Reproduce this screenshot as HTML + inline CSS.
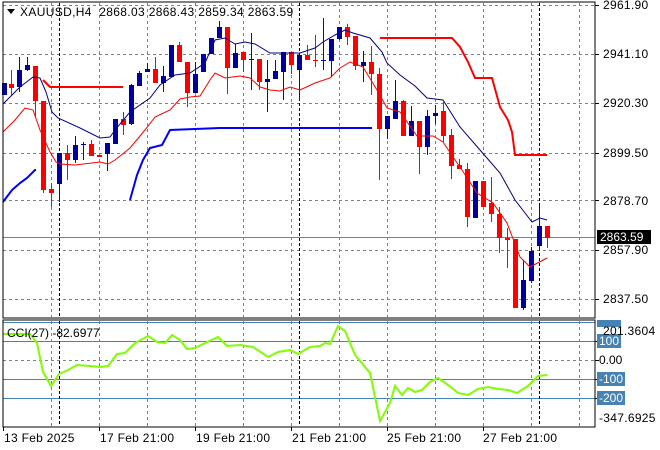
<!DOCTYPE html>
<html><head><meta charset="utf-8"><style>
html,body{margin:0;padding:0;background:#fff;width:660px;height:450px;overflow:hidden}
svg{display:block;font-family:"Liberation Sans",sans-serif}
</style></head><body>
<svg id="s" width="660" height="450" xmlns="http://www.w3.org/2000/svg">
<rect width="660" height="450" fill="#fff"/>
<g id="grid" stroke="#78818c" stroke-dasharray="3,3" stroke-width="1"></g>
<line x1="3" y1="237.5" x2="595" y2="237.5" stroke="#78818c"/>
<g id="lev" stroke="#4682b4" stroke-width="1">
<line x1="3" y1="322.5" x2="595" y2="322.5"/>
<line x1="3" y1="341.5" x2="595" y2="341.5"/>
<line x1="3" y1="379.5" x2="595" y2="379.5"/>
<line x1="3" y1="398.5" x2="595" y2="398.5"/>
</g>
<g id="dots" stroke="#000" stroke-dasharray="3,2"></g>
<g id="c"></g>
<polyline fill="none" stroke="#00008b" stroke-width="1" points="3,104 20,87 33,77 40,78 46,92 52,112 58,118 80,128 100,138 110,137 115,130 130,112 150,98 160,85 175,75 190,73 205,63 215,40 225,38 235,44 245,42 255,44 270,53 285,53 300,53 315,48 323,42 335,35 345,30 353,33 370,38 382,52 387,63 400,75 415,86 427,98 443,100 460,127 480,150 500,173 515,200 532,222 540,218 547,220"/>
<polyline fill="none" stroke="#ff0000" stroke-width="1" points="3,132 15,120 25,108 33,110 40,130 50,152 56,162 60,164 75,165 100,162 108,164 115,160 130,148 145,130 155,117 170,110 180,99 190,97 200,96 210,80 215,73 225,78 240,76 250,78 260,87 270,90 280,91 290,87 300,90 315,83 330,78 340,68 350,62 363,67 377,90 387,108 400,112 417,136 433,136 443,142 453,157 460,167 477,193 493,203 507,223 520,257 530,267 547,258"/>
<polyline fill="none" stroke="#0000ff" stroke-width="2" points="3,202 12,190 20,183 27,178 35,170 36,170"/>
<polyline fill="none" stroke="#0000ff" stroke-width="2" points="130,200 137,175 143,160 150,148 162,145 170,130 220,128 372,128"/>
<polyline fill="none" stroke="#ff0000" stroke-width="2" points="43,80 50,87 123,87"/>
<polyline fill="none" stroke="#ff0000" stroke-width="2" points="380,38 452,38 460,47 468,62 475,78 492,78 500,107 508,120 512,132 515,155 547,155"/>
<polyline fill="none" stroke="#7fff00" stroke-width="2" points="3,334 30,334 37,343 43,372 51,386 59,374 68,370 77,365 90,366 100,367 108,366 117,354 125,353 135,343 148,336 157,342 165,343 172,335 180,340 187,349 195,348 205,343 218,337 227,346 240,345 253,347 268,357 278,352 290,350 298,354 310,347 320,346 325,343 330,344 338,326 345,331 355,355 370,373 380,421 390,403 395,386 402,395 408,388 415,392 422,390 430,382 438,378 448,385 458,393 468,395 478,389 488,387 498,389 508,390 517,393 528,386 538,376 547,375"/>
<rect x="3" y="2" width="592" height="316" fill="none" stroke="#000"/>
<rect x="3" y="320" width="592" height="107" fill="none" stroke="#000"/>
<g id="ticks" stroke="#000"></g>
<polygon points="7,9 15,9 11,14" fill="#000"/>
<text x="20" y="16" font-size="12" letter-spacing="0.35" fill="#000" xml:space="preserve">XAUUSD,H4  2868.03 2868.43 2859.34 2863.59</text>
<text x="7" y="337" font-size="12" fill="#000">CCI(27) -82.6977</text>
<g font-size="12" fill="#000" id="ax" letter-spacing="0.3">
<text x="603" y="9">2961.90</text>
<text x="603" y="58">2941.10</text>
<text x="603" y="107">2920.30</text>
<text x="603" y="157">2899.50</text>
<text x="603" y="205">2878.70</text>
<text x="603" y="254">2857.90</text>
<text x="603" y="303">2837.50</text>
</g>
<rect x="597" y="230" width="54" height="14" fill="#000"/>
<text x="600" y="241" font-size="12" fill="#fff">2863.59</text>
<rect x="597" y="320" width="24" height="7" fill="#4682b4"/>
<rect x="597" y="334" width="24" height="14" fill="#4682b4"/>
<text x="599" y="345" font-size="12" fill="#fff">100</text>
<text x="603" y="335" font-size="12" fill="#000" letter-spacing="0.3">201.3604</text>
<text x="599" y="364" font-size="12" fill="#000">0.00</text>
<rect x="597" y="372" width="28" height="14" fill="#4682b4"/>
<text x="599" y="383" font-size="12" fill="#fff">-100</text>
<rect x="597" y="391" width="28" height="14" fill="#4682b4"/>
<text x="599" y="402" font-size="12" fill="#fff">-200</text>
<text x="599" y="422" font-size="12" fill="#000" letter-spacing="0.3">-347.6925</text>
<g font-size="12" fill="#000" letter-spacing="0.3">
<text x="4" y="442">13 Feb 2025</text>
<text x="100" y="442">17 Feb 21:00</text>
<text x="196" y="442">19 Feb 21:00</text>
<text x="292" y="442">21 Feb 21:00</text>
<text x="387" y="442">25 Feb 21:00</text>
<text x="483" y="442">27 Feb 21:00</text>
</g>
</svg>
<script>
var NS="http://www.w3.org/2000/svg";
function el(p,t,a){var e=document.createElementNS(NS,t);for(var k in a)e.setAttribute(k,a[k]);p.appendChild(e);return e;}
var g=document.getElementById('grid');
[5,54,103,153,200,250,299].forEach(function(y){el(g,'line',{x1:3,x2:595,y1:y+.5,y2:y+.5});});
el(g,'line',{x1:3,x2:595,y1:360.5,y2:360.5});
[51,99,147,195,243,291,339,387,435,483,531,579].forEach(function(x){el(g,'line',{x1:x+.5,x2:x+.5,y1:3,y2:317});el(g,'line',{x1:x+.5,x2:x+.5,y1:321,y2:426});});
var d=document.getElementById('dots');
[59,299,539].forEach(function(x){el(d,'line',{x1:x+.5,x2:x+.5,y1:3,y2:317});el(d,'line',{x1:x+.5,x2:x+.5,y1:321,y2:426});});
var t=document.getElementById('ticks');
[5,54,103,153,200,250,299,341,360,379,398].forEach(function(y){el(t,'line',{x1:595,x2:599,y1:y+.5,y2:y+.5});});
[3,99,195,291,387,483].forEach(function(x){el(t,'line',{x1:x+.5,x2:x+.5,y1:427,y2:431});});
var C=[
[4,83,95,83,95,'b'],[11,84,88,70,95,'r'],[19,70,87,57,92,'b'],[27,65,70,57,71,'b'],[35,66,101,66,117,'r'],[43,101,190,101,193,'r'],[51,189,193,183,207,'r'],[59,153,184,153,202,'b'],[67,153,160,145,180,'r'],[75,145,160,136,163,'b'],[83,144,145,142,160,'b'],[91,144,156,140,156,'r'],[99,155,157,155,157,'r'],[107,143,154,143,171,'b'],[115,119,144,119,144,'b'],[123,119,125,112,135,'r'],[131,85,124,84,125,'b'],[139,73,86,71,86,'b'],[147,69,72,63,72,'b'],[155,69,83,57,83,'r'],[163,76,83,66,92,'b'],[171,45,77,45,77,'b'],[179,45,62,42,62,'r'],[187,62,93,62,107,'r'],[195,74,93,62,93,'b'],[203,54,72,54,72,'b'],[211,38,54,38,54,'b'],[219,27,38,21,38,'b'],[227,27,68,27,94,'r'],[235,53,68,44,68,'b'],[243,52,60,52,72,'r'],[251,59,60,33,90,'b'],[259,59,82,59,90,'r'],[267,79,82,60,112,'b'],[275,71,79,60,79,'b'],[283,52,72,52,100,'b'],[291,52,65,52,74,'r'],[299,55,70,55,100,'b'],[307,55,60,45,60,'r'],[315,60,61,35,67,'r'],[323,60,61,18,70,'b'],[331,39,61,39,77,'b'],[339,27,39,27,40,'b'],[347,27,37,24,45,'r'],[355,36,66,36,70,'r'],[363,62,66,51,82,'b'],[371,62,74,46,95,'r'],[379,74,129,68,180,'r'],[387,116,129,116,139,'b'],[395,101,119,80,119,'b'],[403,101,136,100,136,'r'],[411,121,136,106,136,'b'],[419,121,147,121,174,'r'],[427,116,147,110,155,'b'],[435,113,116,105,124,'b'],[443,111,136,102,142,'r'],[451,135,166,129,179,'r'],[459,165,169,159,169,'r'],[467,169,217,163,227,'r'],[475,181,218,181,218,'b'],[483,181,207,181,207,'r'],[491,203,214,177,222,'r'],[499,214,238,207,253,'r'],[507,238,240,228,268,'r'],[515,239,308,239,308,'r'],[523,280,308,260,310,'b'],[531,251,281,247,283,'b'],[539,226,246,205,250,'b'],[547,226,238,226,248,'r']];
var cg=document.getElementById('c');
C.forEach(function(c){var col=c[5]=='b'?'#0000a0':'#ff0000';var wc=c[5]=='b'?'#0000ff':'#ff0000';
el(cg,'rect',{x:c[0],y:c[3],width:1,height:Math.max(1,c[4]-c[3]),fill:wc});
el(cg,'rect',{x:c[0]-2,y:c[1],width:5,height:Math.max(1,c[2]-c[1]),fill:col});});
</script>
</body></html>
